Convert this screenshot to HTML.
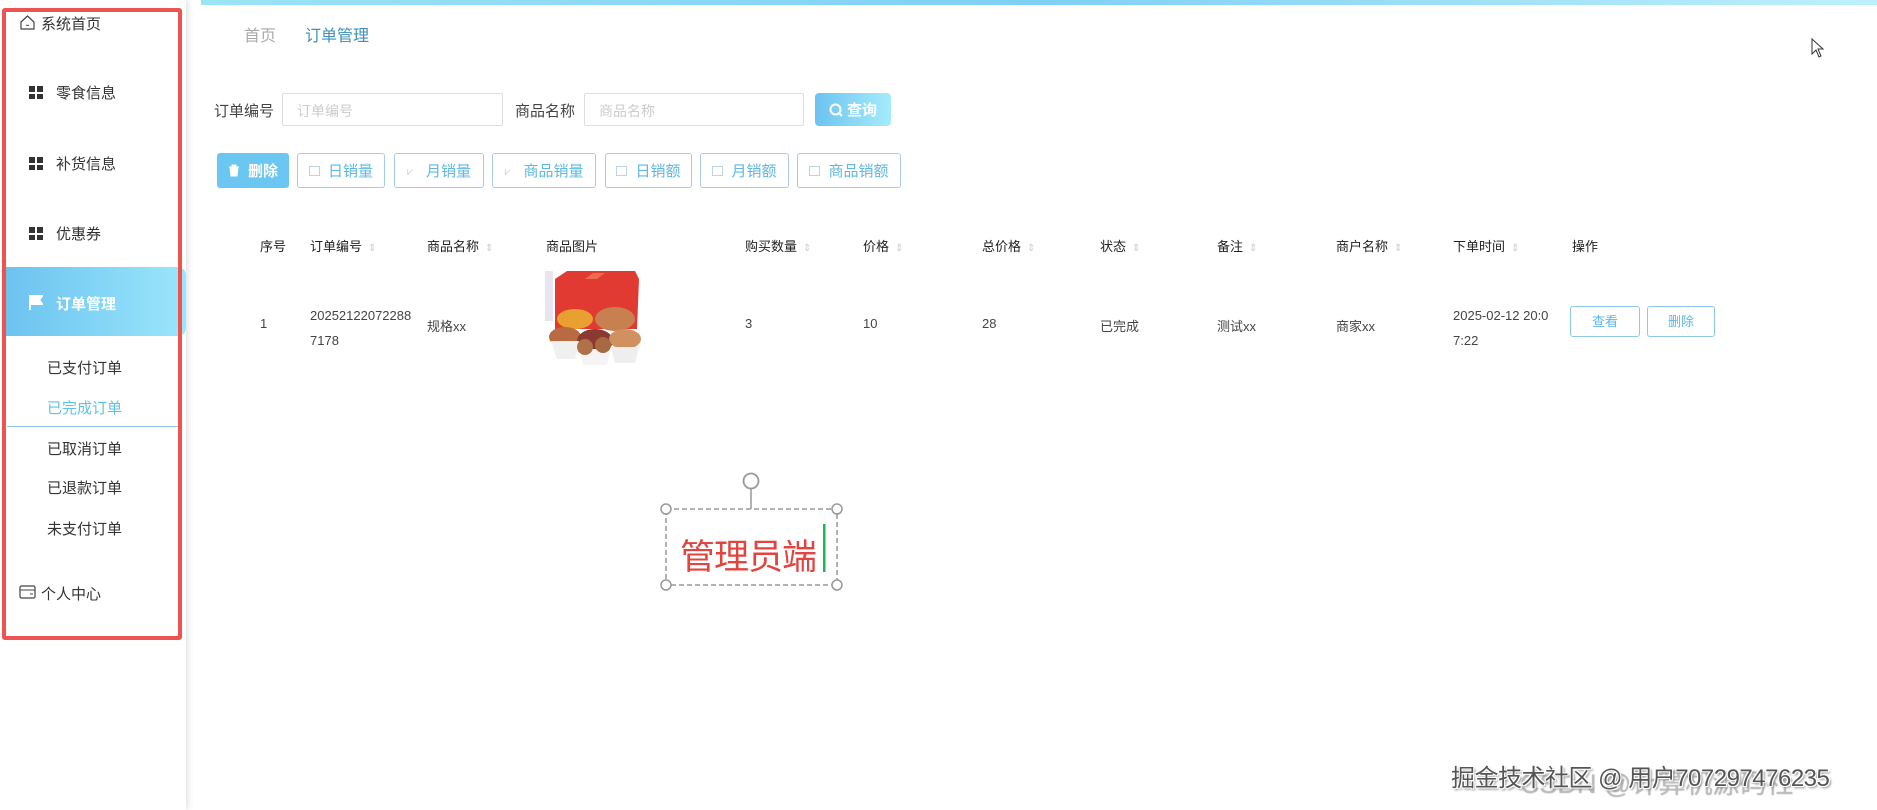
<!DOCTYPE html>
<html><head><meta charset="utf-8">
<style>
*{margin:0;padding:0;box-sizing:border-box}
body{width:1877px;height:810px;background:#fff;position:relative;overflow:hidden;font-family:"Liberation Sans","Noto Sans CJK SC",sans-serif;color:#333}
.a{position:absolute;white-space:nowrap}
.side{position:absolute;left:0;top:0;width:186px;height:810px;background:#fff;box-shadow:2px 0 6px rgba(0,0,0,.12)}
.red{position:absolute;left:2px;top:8px;width:180px;height:632px;border:4px solid #ef5350;border-radius:3px}
.mi{font-size:15px;color:#333}
.grid{position:absolute;width:14px;height:13px}
.grid i{position:absolute;width:6px;height:5.5px;background:#333}
.btn{position:absolute;top:153px;height:35px;border:1px solid #a8cce0;border-radius:3px;color:#5eb8e0;font-size:15px;display:flex;align-items:center;justify-content:center;gap:8px;background:#fff}
.btn s{display:inline-block;width:11px;height:10px;border:1px solid #c0d4e0;text-decoration:none}
.th{position:absolute;top:236px;font-size:13px;color:#222}
.th b{font-weight:normal;color:#ccc;font-size:10px;margin-left:6px}
.td{position:absolute;font-size:13px;color:#444}
</style></head><body>
<div class="side"></div>
<div class="a" style="left:201px;top:0;width:1676px;height:5px;background:linear-gradient(90deg,#9be4f7,#7fd0f5,#bdf0fb)"></div>

<svg class="a" style="left:19px;top:14px" width="17" height="17" viewBox="0 0 17 17"><path d="M2 8 L8.5 2 L15 8 V15 H2 Z" fill="none" stroke="#444" stroke-width="1.2"/><path d="M7 11 Q8.5 12 10 11" fill="none" stroke="#444"/></svg>
<div class="a mi" style="left:41px;top:13px">系统首页</div>
<div class="grid" style="left:29px;top:86px"><i style="left:0;top:0"></i><i style="left:8px;top:0"></i><i style="left:0;top:7.5px"></i><i style="left:8px;top:7.5px"></i></div>
<div class="a mi" style="left:56px;top:82px">零食信息</div>
<div class="grid" style="left:29px;top:157px"><i style="left:0;top:0"></i><i style="left:8px;top:0"></i><i style="left:0;top:7.5px"></i><i style="left:8px;top:7.5px"></i></div>
<div class="a mi" style="left:56px;top:153px">补货信息</div>
<div class="grid" style="left:29px;top:227px"><i style="left:0;top:0"></i><i style="left:8px;top:0"></i><i style="left:0;top:7.5px"></i><i style="left:8px;top:7.5px"></i></div>
<div class="a mi" style="left:56px;top:223px">优惠券</div>
<div class="a" style="left:6px;top:267px;width:180px;height:69px;background:linear-gradient(90deg,#6cc3f0,#9ae6fb);border-radius:0 8px 8px 0"></div>
<svg class="a" style="left:29px;top:295px" width="14" height="15" viewBox="0 0 14 15"><path d="M1 0 V15 M1 1 H13 L10 5 L13 9 H1" fill="#fff" stroke="#fff" stroke-width="2"/></svg>
<div class="a mi" style="left:56px;top:293px;color:#fff;font-weight:bold">订单管理</div>
<div class="a mi" style="left:47px;top:357px">已支付订单</div>
<div class="a mi" style="left:47px;top:397px;color:#5ec2e6">已完成订单</div>
<div class="a" style="left:7px;top:426px;width:171px;height:1px;background:#8fc9e6"></div>
<div class="a mi" style="left:47px;top:438px">已取消订单</div>
<div class="a mi" style="left:47px;top:477px">已退款订单</div>
<div class="a mi" style="left:47px;top:518px">未支付订单</div>
<svg class="a" style="left:19px;top:585px" width="17" height="14" viewBox="0 0 17 14"><rect x="1" y="1" width="15" height="12" rx="1.5" fill="none" stroke="#444" stroke-width="1.2"/><path d="M1 5 H16 M11 9 H14" stroke="#444"/></svg>
<div class="a mi" style="left:41px;top:583px">个人中心</div>
<div class="red"></div>

<div class="a" style="left:244px;top:22px;font-size:16px;color:#aaa">首页</div>
<div class="a" style="left:305px;top:22px;font-size:16px;color:#3f8fb8">订单管理</div>

<div class="a" style="left:214px;top:100px;font-size:15px;color:#444">订单编号</div>
<div class="a" style="left:282px;top:93px;width:221px;height:33px;border:1px solid #ddd;border-radius:2px;padding:7px 14px;font-size:14px;color:#ccc">订单编号</div>
<div class="a" style="left:515px;top:100px;font-size:15px;color:#444">商品名称</div>
<div class="a" style="left:584px;top:93px;width:220px;height:33px;border:1px solid #ddd;border-radius:2px;padding:7px 14px;font-size:14px;color:#ccc">商品名称</div>
<div class="a" style="left:815px;top:93px;width:76px;height:33px;border-radius:4px;background:linear-gradient(90deg,#6cc3f0,#a5ecfb);color:#fff;font-size:15px;font-weight:bold;display:flex;align-items:center;justify-content:center;gap:4px"><svg width="14" height="14" viewBox="0 0 14 14"><circle cx="6.5" cy="6.5" r="5" fill="none" stroke="#fff" stroke-width="2"/><path d="M10 10 L13 13" stroke="#fff" stroke-width="2"/></svg>查询</div>

<div class="btn" style="left:217px;width:72px;background:#6cc6f2;border-color:#6cc6f2;color:#fff;font-weight:bold"><svg width="12" height="13" viewBox="0 0 12 13"><path d="M1 3 H11 M4 3 V1 H8 V3 M2 3 L3 12 H9 L10 3" fill="#fff" stroke="#fff"/></svg>删除</div>
<div class="btn" style="left:297px;width:88px"><s></s>日销量</div>
<div class="btn" style="left:394px;width:90px"><s style="border:none;color:#c0d4e0;font-size:11px">⩗</s>月销量</div>
<div class="btn" style="left:492px;width:104px"><s style="border:none;color:#c0d4e0;font-size:11px">⩗</s>商品销量</div>
<div class="btn" style="left:605px;width:87px"><s></s>日销额</div>
<div class="btn" style="left:700px;width:89px"><s></s>月销额</div>
<div class="btn" style="left:797px;width:104px"><s></s>商品销额</div>

<div class="th" style="left:260px">序号</div>
<div class="th" style="left:310px">订单编号<b>⇕</b></div>
<div class="th" style="left:427px">商品名称<b>⇕</b></div>
<div class="th" style="left:546px">商品图片</div>
<div class="th" style="left:745px">购买数量<b>⇕</b></div>
<div class="th" style="left:863px">价格<b>⇕</b></div>
<div class="th" style="left:982px">总价格<b>⇕</b></div>
<div class="th" style="left:1100px">状态<b>⇕</b></div>
<div class="th" style="left:1217px">备注<b>⇕</b></div>
<div class="th" style="left:1336px">商户名称<b>⇕</b></div>
<div class="th" style="left:1453px">下单时间<b>⇕</b></div>
<div class="th" style="left:1572px">操作</div>

<div class="td" style="left:260px;top:316px">1</div>
<div class="td" style="left:310px;top:303px;line-height:25px">20252122072288<br>7178</div>
<div class="td" style="left:427px;top:316px">规格xx</div>
<svg class="a" style="left:545px;top:269px" width="98" height="98" viewBox="0 0 98 98">
<rect x="0" y="2" width="8" height="50" fill="#e8e4f0"/>
<path d="M10 10 L22 2 L90 2 L94 10 L92 60 L10 60 Z" fill="#e03a32"/>
<path d="M40 10 L48 4 L60 4 L52 10 Z" fill="#f06a50"/>
<ellipse cx="30" cy="50" rx="18" ry="10" fill="#e8a030"/>
<ellipse cx="70" cy="50" rx="20" ry="12" fill="#c88050"/>
<ellipse cx="20" cy="68" rx="16" ry="10" fill="#b86a40"/>
<ellipse cx="50" cy="72" rx="18" ry="12" fill="#8a3a30"/>
<ellipse cx="80" cy="70" rx="16" ry="10" fill="#d09060"/>
<path d="M6 72 L34 72 L30 90 L12 90 Z" fill="#f0f0f0"/>
<path d="M34 80 L66 80 L62 96 L38 96 Z" fill="#f4f4f4"/>
<path d="M66 78 L94 78 L90 94 L70 94 Z" fill="#eeeeee"/>
<circle cx="40" cy="78" r="8" fill="#b07048"/><circle cx="58" cy="76" r="8" fill="#a86840"/>
</svg>
<div class="td" style="left:745px;top:316px">3</div>
<div class="td" style="left:863px;top:316px">10</div>
<div class="td" style="left:982px;top:316px">28</div>
<div class="td" style="left:1100px;top:316px">已完成</div>
<div class="td" style="left:1217px;top:316px">测试xx</div>
<div class="td" style="left:1336px;top:316px">商家xx</div>
<div class="td" style="left:1453px;top:303px;line-height:25px">2025-02-12 20:0<br>7:22</div>
<div class="a" style="left:1570px;top:306px;width:70px;height:31px;border:1px solid #8fc9e6;border-radius:3px;color:#5eb8e0;font-size:13px;text-align:center;line-height:29px">查看</div>
<div class="a" style="left:1647px;top:306px;width:68px;height:31px;border:1px solid #8fc9e6;border-radius:3px;color:#5eb8e0;font-size:13px;text-align:center;line-height:29px">删除</div>

<svg class="a" style="left:655px;top:470px" width="195" height="125" viewBox="0 0 195 125">
<rect x="11" y="39" width="171" height="76" fill="none" stroke="#999" stroke-width="1.5" stroke-dasharray="5,3"/>
<line x1="96" y1="19" x2="96" y2="39" stroke="#999" stroke-width="1.5"/>
<circle cx="96" cy="11" r="7.5" fill="#fff" stroke="#999" stroke-width="1.8"/>
<circle cx="11" cy="39" r="5" fill="#fff" stroke="#999" stroke-width="1.5"/>
<circle cx="182" cy="39" r="5" fill="#fff" stroke="#999" stroke-width="1.5"/>
<circle cx="11" cy="115" r="5" fill="#fff" stroke="#999" stroke-width="1.5"/>
<circle cx="182" cy="115" r="5" fill="#fff" stroke="#999" stroke-width="1.5"/>
<rect x="168" y="54" width="2.5" height="48" fill="#1fb35a"/>
</svg>
<div class="a" style="left:680px;top:529px;font-size:35px;color:#e2443f;letter-spacing:-1px">管理员端</div>

<svg class="a" style="left:1811px;top:38px" width="16" height="22" viewBox="0 0 16 22"><path d="M1 1 V16 L5 12 L8 19 L10 18 L7 11 H12 Z" fill="#fff" stroke="#333" stroke-width="1"/></svg>

<div class="a" style="left:1520px;top:762px;font-size:27px;color:rgba(200,200,200,.7);text-shadow:0 0 1px #999">CSDN @计算机源码社</div>
<div class="a" style="left:1451px;top:758px;font-size:24px;letter-spacing:-0.5px;color:#555;text-shadow:1px 1px 0 #fff,-1px -1px 0 #fff,1px -1px 0 #fff,-1px 1px 0 #fff,2px 2px 2px #888">掘金技术社区 @ 用户707297476235</div>
</body></html>
